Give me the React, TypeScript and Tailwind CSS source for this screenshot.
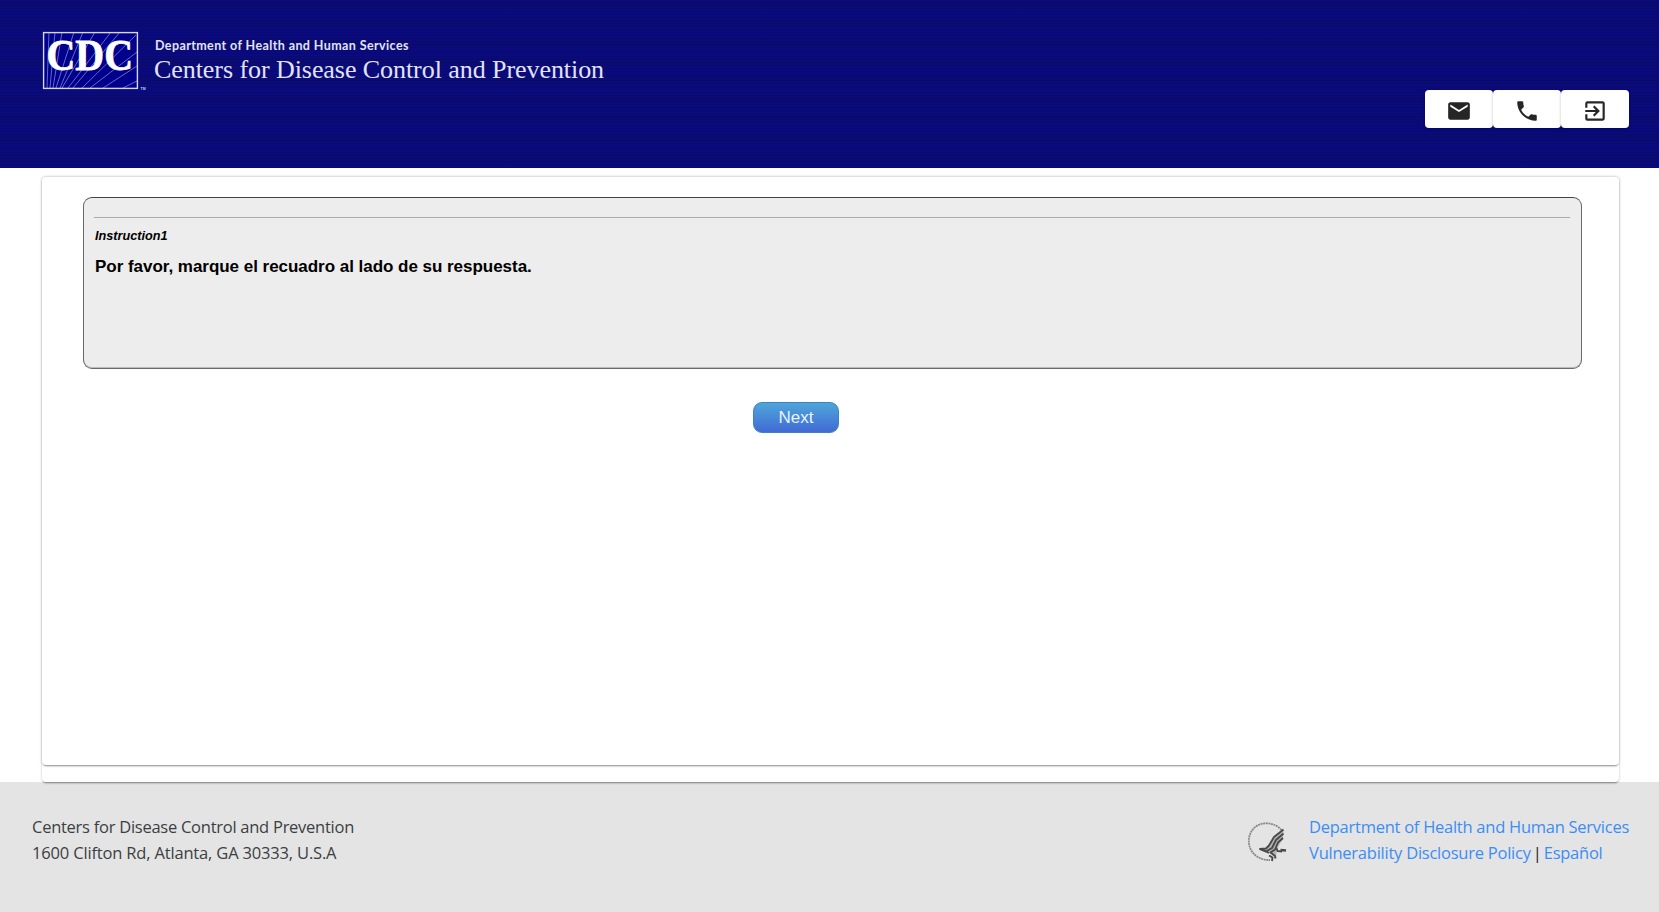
import React from "react";
import { MdEmail, MdPhone, MdExitToApp } from "react-icons/md";

const rays = [
  "M4 56L6 0", "M7 56L12 0", "M10 56L19 0", "M13 56L31 0", "M17 56L40 0",
  "M19 56L52 0", "M25 56L68 0", "M30 56L77 0", "M39 56L93 3", "M47 56L94 20",
  "M60 56L94 34", "M80 56L94 49",
];

function CdcLogo() {
  return (
    <svg width="108" height="64" viewBox="0 -4 108 64" className="-mt-1 -mr-1 shrink-0 overflow-visible">
      <rect x="0.5" y="0.5" width="94" height="56" fill="#00008c" />
      <path d={rays.join("")} stroke="#7074c8" strokeWidth="0.9" fill="none" />
      <text x="3.5" y="38.3" textLength="86.5" lengthAdjust="spacingAndGlyphs" fill="#fff" stroke="#fff" strokeWidth="0.8" fontSize="45" fontWeight="700" fontFamily="Liberation Serif, serif">CDC</text>
      <rect x="0.6" y="0.6" width="93.8" height="55.8" fill="none" stroke="#d5d6f2" strokeWidth="1.4" />
      <text x="97.5" y="57.5" fill="#c5c6ea" fontSize="3.5" fontWeight="700" fontFamily="Liberation Sans, sans-serif">TM</text>
    </svg>
  );
}

function HhsSeal() {
  return (
    <svg width="40" height="42" viewBox="0 0 40 42" fill="none" className="shrink-0">
      <path d="M33.500 8C29 3 23 1 17 1.300C7 2 0.800 10 0.800 19C0.800 30 10 38.500 22 38" stroke="#8a8a8a" strokeWidth="1.800" strokeDasharray="2 0.6" />
      <path d="M35.500 7.500L26 15L21 23.500L18 26.500L12 27L18 30L22 31L28 35L29 27L35 16Z" fill="#b4b4b4" />
      <g stroke="#4a4a4a" strokeWidth="1.900" strokeLinejoin="round">
        <path d="M35.500 7.500L26 15L21 23.500L18 26.500L12 27L18 29.500" />
        <path d="M35.500 11.500L28 18L24 26L18 29.500L21 31" />
        <path d="M35 16L30 20.500L27 27.500L22.500 30.500L27 34L27.500 36.500" />
        <path d="M28.500 26L29.500 29L34 29.500" />
        <path d="M32.500 28L38 28.500" strokeWidth="2.400" />
        <path d="M21 33.500L24.500 35.500L24 39" />
      </g>
    </svg>
  );
}

const actions = [
  { label: "Email", Icon: MdEmail },
  { label: "Phone", Icon: MdPhone },
  { label: "Exit", Icon: MdExitToApp },
];

export default function App() {
  return (
    <div className="flex h-[912px] flex-col overflow-hidden bg-white font-['Liberation_Sans',Arial,sans-serif]">
      <header className="flex h-[168px] shrink-0 justify-between bg-[#0b0b78] bg-[repeating-linear-gradient(180deg,rgba(6,6,80,0)_0px,rgba(6,6,80,0)_2px,rgba(6,6,80,0.25)_2px,rgba(6,6,80,0.25)_3px),repeating-linear-gradient(180deg,#0b0b74_0px,#0b0b78_8px,#0a0a80_14px,#0a0a82_18px,#0b0b74_19px)] pr-[30px] pl-[43px]">
        <div className="flex pt-8">
          <CdcLogo />
          <div className="pt-[5px] pl-[7px] whitespace-nowrap text-[#e2e3f6]">
            <div className="pl-px font-['Lato',sans-serif] text-[12.500px] leading-[17px] font-bold tracking-[0.400px]">Department of Health and Human Services</div>
            <div className="font-['Liberation_Serif',serif] text-[26px] leading-8 tracking-[-0.065px]">Centers for Disease Control and Prevention</div>
          </div>
        </div>
        <nav className="flex pt-[90px]">
          {actions.map(({ label, Icon }) => (
            <button key={label} aria-label={label} className="flex h-[38px] w-[68px] items-center justify-center rounded bg-white text-[#262626] shadow-[0_1px_3px_rgba(0,0,0,0.25)]">
              <Icon size={26} className="mt-[3px]" />
            </button>
          ))}
        </nav>
      </header>

      <main className="relative z-10 mt-[9px] mr-[40px] ml-[42px] h-[605px] shrink-0 rounded bg-white shadow-[0_2px_2px_-1px_rgba(0,0,0,0.4),0_0_3px_rgba(0,0,0,0.18)]">
        <div className="h-[588px] rounded bg-white pr-[37px] pl-[41px] pt-5 shadow-[0_2px_2px_-1px_rgba(0,0,0,0.4),0_0_3px_rgba(0,0,0,0.18)]">
          <section className="h-[172px] rounded-[9px] border border-[#6a6a6a] border-t-[#444] bg-[#ededed] px-[11px] pt-[19px] text-black shadow-[inset_0_-1px_0_#bbb]">
            <hr className="-ml-px border-[#aaa]" />
            <p className="mt-[10px] text-[12.700px] leading-4 font-bold italic">Instruction1</p>
            <p className="mt-[11px] text-[17px] leading-6 font-bold tracking-[-0.030px]">Por favor, marque el recuadro al lado de su respuesta.</p>
          </section>
          <button className="mt-[33px] ml-[670px] block h-[31px] w-[86px] rounded-[9px] border border-[#3d83bd] bg-linear-to-b from-[#4fa5da] to-[#416ad4] text-[17px] leading-none text-[#eaf3ff]">Next</button>
        </div>
      </main>

      <footer className="flex flex-1 justify-between bg-[#e4e4e4] pt-8 pr-[30px] pl-8 font-['Open_Sans','Noto_Sans',sans-serif] text-[16.500px] leading-[25.500px] text-[#3b3f42]">
        <address className="whitespace-nowrap not-italic">
          <div className="tracking-[-0.260px]">Centers for Disease Control and Prevention</div>
          <div className="tracking-[-0.170px]">1600 Clifton Rd, Atlanta, GA 30333, U.S.A</div>
        </address>
        <div className="flex">
          <div className="pt-2 pr-[21px]"><HhsSeal /></div>
          <div className="whitespace-nowrap text-[#3b8df5]">
            <div className="tracking-[-0.260px]">Department of Health and Human Services</div>
            <div className="flex tracking-[-0.240px]">
              <a>Vulnerability Disclosure Policy</a>
              <span className="w-[13px] text-center text-[#222]">|</span>
              <a>Español</a>
            </div>
          </div>
        </div>
      </footer>
    </div>
  );
}
